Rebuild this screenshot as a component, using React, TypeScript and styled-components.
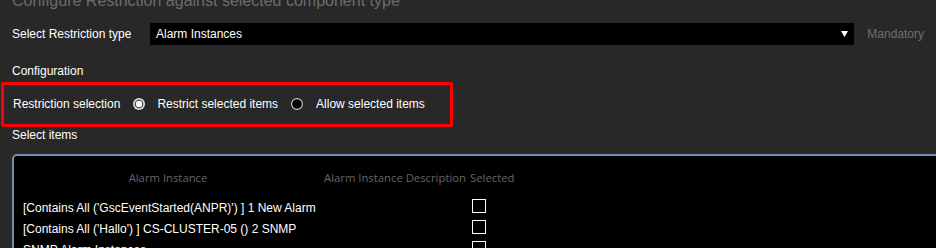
import React from 'react';
import styled, { createGlobalStyle } from 'styled-components';

const GlobalStyle = createGlobalStyle`
  html, body {
    margin: 0;
    padding: 0;
    background: #282828;
    overflow: hidden;
  }
  body {
    font-family: "Liberation Sans", Arial, sans-serif;
    font-size: 12px;
    color: #fff;
  }
`

const Page = styled.div`
  width: 936px;
  height: 248px;
  padding: 0 12px;
  box-sizing: border-box;
  overflow: hidden;
`

const Title = styled.div`
  margin-top: -8px;
  height: 18px;
  line-height: 18px;
  font-size: 16px;
  color: #6c6c6c;
  white-space: nowrap;
`

const FieldRow = styled.div`
  display: flex;
  align-items: center;
  margin-top: 13px;
  height: 22px;
`

const FieldLabel = styled.span`
  width: 138px;
  flex: none;
`

const Select = styled.div`
  flex: 1;
  height: 22px;
  background: #000;
  display: flex;
  align-items: center;
  justify-content: space-between;
  padding: 0 6px;
  box-sizing: border-box;
`

const Hint = styled.span`
  margin-left: 13px;
  color: #6e6e6e;
`

const Section = styled.div<{ $top: number }>`
  margin-top: ${p => p.$top}px;
  height: 16px;
  line-height: 16px;
`

const Highlight = styled.div`
  display: flex;
  align-items: center;
  gap: 12px;
  margin: 3px 0 0 -11px;
  width: 452px;
  height: 45px;
  box-sizing: border-box;
  border: 3px solid #ff0000;
  border-radius: 2px;
  padding: 0 0 2px 9px;
`

const RadioLabel = styled.span<{ $gap?: number }>`
  margin-right: ${p => p.$gap ?? 0}px;
`

const RadioIcon = styled.svg<{ $gap?: number }>`
  flex: none;
  margin-right: ${p => p.$gap ?? 0}px;
`

const Panel = styled.div`
  margin-top: 11px;
  width: 960px;
  height: 140px;
  background: #000;
  border: 2px solid #6e8fb0;
  border-radius: 5px;
`

const Grid = styled.div`
  display: grid;
  grid-template-columns: 308px 146px 1fr;
  grid-auto-rows: 21px;
  grid-template-rows: 42px;
`

const HeadCell = styled.div<{ $center?: boolean }>`
  font-family: "Open Sans", sans-serif;
  font-size: 11.3px;
  color: #666;
  display: flex;
  align-items: center;
  justify-content: ${p => (p.$center ? 'center' : 'flex-start')};
  padding-left: ${p => (p.$center ? 0 : 2)}px;
  white-space: nowrap;
`

const Cell = styled.div`
  padding-left: 9px;
  line-height: 21px;
  white-space: nowrap;
`

const CheckCell = styled.div`
  padding: 1px 0 0 4px;
`

const Checkbox = styled.div`
  width: 14px;
  height: 14px;
  box-sizing: border-box;
  border: 1px solid #fff;
`

const Radio = ({ checked, gap }: { checked?: boolean; gap?: number }) => (
  <RadioIcon width="12" height="12" viewBox="0 0 12 12" $gap={gap}>
    {checked ? (
      <>
        <circle cx="6" cy="6" r="6" fill="#d9d9d9" />
        <circle cx="6" cy="6" r="4.3" fill="#3c3c3c" />
        <circle cx="6" cy="6" r="3.2" fill="#fff" />
      </>
    ) : (
      <circle cx="6" cy="6" r="5.4" fill="#000" stroke="#cfcfcf" strokeWidth="1.1" />
    )}
  </RadioIcon>
);

const Arrow = () => (
  <svg width="7" height="6" viewBox="0 0 7 6">
    <polygon points="0,0 7,0 3.5,6" fill="#fff" />
  </svg>
);

const rows = [
  "[Contains All ('GscEventStarted(ANPR)') ] 1 New Alarm",
  "[Contains All ('Hallo') ] CS-CLUSTER-05 () 2 SNMP",
  'SNMP Alarm Instances',
];

const App: React.FC = () => {
  return (
    <Page>
      <GlobalStyle />
      <Title>Configure Restriction against selected component type</Title>
      <FieldRow>
        <FieldLabel>Select Restriction type</FieldLabel>
        <Select>
          <span>Alarm Instances</span>
          <Arrow />
        </Select>
        <Hint>Mandatory</Hint>
      </FieldRow>
      <Section $top={18}>Configuration</Section>
      <Highlight>
        <RadioLabel $gap={1}>Restriction selection</RadioLabel>
        <Radio checked />
        <RadioLabel $gap={1}>Restrict selected items</RadioLabel>
        <Radio gap={1} />
        <RadioLabel>Allow selected items</RadioLabel>
      </Highlight>
      <Section $top={0}>Select items</Section>
      <Panel>
        <Grid>
          <HeadCell $center>Alarm Instance</HeadCell>
          <HeadCell $center>Alarm Instance Description</HeadCell>
          <HeadCell>Selected</HeadCell>
          {rows.map(r => (
            <React.Fragment key={r}>
              <Cell>{r}</Cell>
              <Cell />
              <CheckCell>
                <Checkbox />
              </CheckCell>
            </React.Fragment>
          ))}
        </Grid>
      </Panel>
    </Page>
  );
};

export default App;
